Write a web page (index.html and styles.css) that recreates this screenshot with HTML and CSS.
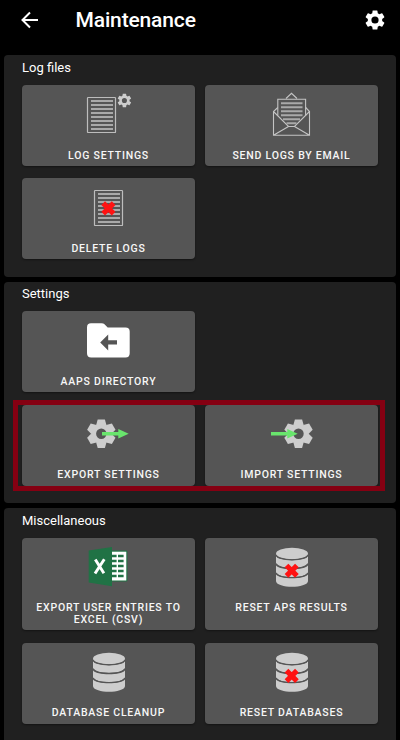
FILE: index.html
```html
<!DOCTYPE html>
<html lang="en">
<head>
<meta charset="utf-8">
<title>Maintenance</title>
<link rel="stylesheet" href="styles.css">
</head>
<body>
<svg class="defs" width="0" height="0" aria-hidden="true">
  <defs>
    <g id="doc">
      <rect x=".5" y=".5" width="28" height="35" rx=".6" fill="none" stroke="#bdbdbd" stroke-width="1.2"/>
      <path d="M4 4H26M4 8H26M4 12H26M4 16H26M4 20H26M4 24H26M4 28H26M4 32H26" stroke="#a9a9a9" stroke-width="1.900"/>
    </g>
    <path id="tooth" d="M-5.2-8.5-3.6-14.3H3.6L5.2-8.5Z"/>
    <g id="gear" fill="#cdcdcd">
      <circle r="7.7" fill="none" stroke="#cdcdcd" stroke-width="5"/>
      <use href="#tooth"/>
      <use href="#tooth" transform="rotate(60)"/>
      <use href="#tooth" transform="rotate(120)"/>
      <use href="#tooth" transform="rotate(180)"/>
      <use href="#tooth" transform="rotate(240)"/>
      <use href="#tooth" transform="rotate(300)"/>
    </g>
    <path id="cog" d="M19.14 12.94c.04-.3.06-.61.06-.94s-.02-.64-.07-.94l2.03-1.58a.49.49 0 0 0 .12-.61l-1.92-3.32a.488.488 0 0 0-.59-.22l-2.39.96c-.5-.38-1.03-.7-1.62-.94l-.36-2.54a.484.484 0 0 0-.48-.41h-3.84c-.24 0-.43.17-.47.41l-.36 2.54c-.59.24-1.13.57-1.62.94l-2.39-.96a.49.49 0 0 0-.59.22L2.74 8.87c-.12.21-.08.47.12.61l2.03 1.58c-.05.3-.09.63-.09.94s.02.64.07.94l-2.03 1.58a.49.49 0 0 0-.12.61l1.92 3.32c.12.22.37.29.59.22l2.39-.96c.5.38 1.03.7 1.62.94l.36 2.54c.05.24.24.41.48.41h3.84c.24 0 .44-.17.47-.41l.36-2.54c.59-.24 1.13-.56 1.62-.94l2.39.96c.22.08.47 0 .59-.22l1.92-3.32a.49.49 0 0 0-.12-.61zM12 15.6A3.6 3.6 0 1 1 12 8.400a3.600 3.600 0 0 1 0 7.200z"/>
    <path id="arrow" fill="#69e56d" d="M0-1.700H16.300V-4.700L26.700 0 16.300 4.700V1.700H0Z"/>
    <path id="cross" d="M-5.200-5.200 5.200 5.200M5.200-5.200-5.200 5.200" stroke="#ff1212" stroke-width="5.200"/>
    <g id="db" fill="#cdcdcd">
      <ellipse cx="16" cy="5.700" rx="16" ry="5.700"/>
      <path id="disk" d="M0 8.300C3 13.700 29 13.700 32 8.300V15.500C29 21.700 3 21.700 0 15.500Z"/>
      <use href="#disk" y="9.100"/>
      <path d="M0 26.500C3 31.900 29 31.900 32 26.500V33.500C31 40.800 1 40.800 0 33.500Z"/>
      <path d="M0 7.500C3 13.500 29 13.500 32 7.500M0 16C3 22 29 22 32 16M0 25.200C3 31.200 29 31.200 32 25.200" fill="none" stroke="#555" stroke-width="1.200"/>
    </g>
  </defs>
</svg>

<header class="bar">
  <svg class="back" viewBox="0 0 18 18"><path d="M17 9H2M9 1.500 1.500 9 9 16.500" fill="none" stroke="#fff" stroke-width="2"/></svg>
  <h1>Maintenance</h1>
  <svg class="cog" viewBox="0 0 24 24" fill="#fff"><use href="#cog"/></svg>
</header>

<main>
  <section class="panel first">
    <h2>Log files</h2>
    <div class="grid">
      <button><svg viewBox="0 0 55 44"><use href="#doc" x="6" y="6"/><g transform="translate(34.900 1) scale(.71)" fill="#cdcdcd"><use href="#cog"/></g></svg><span>LOG SETTINGS</span></button>
      <button><svg viewBox="0 0 55 46" fill="none" stroke="#c4c4c4" stroke-width="1.100">
        <path d="M22 7.500 27.500 2.300 33 7.500M13.800 16.500 9.500 20.500V44.300H45.500V20.500L41.700 16.500M9.500 20.500 24.500 35.500H30.500L45.500 20.500M9.500 44.300 24.500 35.500M45.500 44.300 30.500 35.500"/>
        <path d="M13.800 24.500V8.300H41.600V24.500"/>
        <path d="M17 12.200H38.500M17 16.200H38.500M17 20.200H38.500M17 24.200H38.500M19 28.200H36M22.500 32.200H32.500" stroke="#a9a9a9" stroke-width="1.900"/>
      </svg><span>SEND LOGS BY EMAIL</span></button>
      <button><svg viewBox="0 0 55 44"><use href="#doc" x="13" y="6"/><use href="#cross" x="27.400" y="24.400"/></svg><span>DELETE LOGS</span></button>
    </div>
  </section>

  <section class="panel">
    <h2>Settings</h2>
    <div class="grid">
      <button><svg viewBox="0 0 55 44"><path fill="#fff" d="M10 6.300H20.500Q22.500 6.300 23.500 7.300L26.700 10.400H44.500Q48.700 10.400 48.700 14.500V36.200Q48.700 40.400 44.500 40.400H10.200Q6 40.400 6 36.200V10.500Q6 6.300 10 6.300Z"/><path fill="#555" d="M19.200 25.500 27.200 17.400V23.300H36V27.600H27.200V33.500Z"/></svg><span>AAPS DIRECTORY</span></button>
      <i class="gap"></i>
      <button><svg viewBox="0 0 55 44"><use href="#gear" x="20.300" y="22.700"/><use href="#arrow" x="21" y="22.700"/></svg><span>EXPORT SETTINGS</span></button>
      <button><svg viewBox="0 0 55 44"><use href="#gear" x="34.500" y="22.700"/><use href="#arrow" x="7" y="22.700"/></svg><span>IMPORT SETTINGS</span></button>
    </div>
    <div class="highlight"></div>
  </section>

  <section class="panel last">
    <h2>Miscellaneous</h2>
    <div class="grid">
      <button><svg viewBox="0 0 55 44">
        <path fill="#207245" d="M30 6.500H45.200Q46.400 6.500 46.400 7.700V36.500Q46.400 37.500 45.200 37.500H30Z"/>
        <path fill="#fff" d="M30 7.700H45.300V36.500H30Z"/>
        <path stroke="#207245" stroke-width="2.500" d="M31 11.900H35.600M37 11.900H42.600M31 16.900H35.600M37 16.900H42.600M31 21.900H35.600M37 21.900H42.600M31 26.900H35.600M37 26.900H42.600M31 31.900H35.600M37 31.900H42.600"/>
        <path fill="#207245" d="M7.700 6.500 31 3V42.300L7.700 38.600Z"/>
        <path d="M14.300 15.500 22.900 29.300M23.300 15.200 14 29.500" stroke="#fff" stroke-width="2.900"/>
      </svg><span>EXPORT USER ENTRIES TO EXCEL (CSV)</span></button>
      <button><svg viewBox="0 0 55 44"><use href="#db" x="12" y="3.800"/><use href="#cross" x="27.700" y="26.700"/></svg><span>RESET APS RESULTS</span></button>
      <button><svg viewBox="0 0 55 44"><use href="#db" x="12" y="3.800"/></svg><span>DATABASE CLEANUP</span></button>
      <button><svg viewBox="0 0 55 44"><use href="#db" x="12" y="3.800"/><use href="#cross" x="27.700" y="26.900"/></svg><span>RESET DATABASES</span></button>
    </div>
  </section>
</main>
</body>
</html>
```
FILE: styles.css
```css
* { box-sizing: border-box; }
html, body { height: 740px; overflow: hidden; }
body { margin: 0; background: #000; color: #fff; font-family: Roboto, "Liberation Sans", sans-serif; }
.defs { position: absolute; }
.bar { height: 55.300px; padding: 0 12.700px 15.300px 20.500px; display: flex; align-items: center; }
.back { width: 18px; height: 18px; }
.bar h1 { margin: 0 0 0 37px; font-size: 21px; line-height: 24px; font-weight: 500; letter-spacing: -.15px; flex: 1; }
.cog { width: 24px; height: 24px; }
main { display: flex; flex-direction: column; gap: 4.700px; padding: 0 4px; }
.panel { position: relative; height: 221.900px; background: #202020; border-radius: 4px; padding: 3.600px 18px 0; flex: none; }
.panel.first { height: 221.600px; }
.panel.last { height: 240px; }
.panel h2 { margin: 0 0 8.200px; font-size: 13px; line-height: 18px; font-weight: 400; }
.grid { display: grid; grid-template-columns: 173px 173px; column-gap: 10px; row-gap: 12.300px; }
button { min-height: 81px; border: 0; border-radius: 4px; padding: 6px 8px 4.300px; background: #555; color: #f7f7f7; font: 500 10.500px/12px Roboto, "Liberation Sans", sans-serif; letter-spacing: .78px; display: flex; flex-direction: column; align-items: center; justify-content: space-between; box-shadow: 0 1px 2px #0006; }
.last button:nth-child(-n+2) { height: 92.400px; justify-content: flex-start; }
.last button:nth-child(-n+2) span { margin-top: 14px; }
button svg { width: 55px; height: 46px; flex: none; margin-bottom: -2px; overflow: visible; }
button svg[viewBox="0 0 55 44"] { height: 44px; margin-bottom: 0; }
.highlight { position: absolute; left: 9px; top: 118.200px; width: 372px; height: 91px; border: 5px solid #850012; }
```
